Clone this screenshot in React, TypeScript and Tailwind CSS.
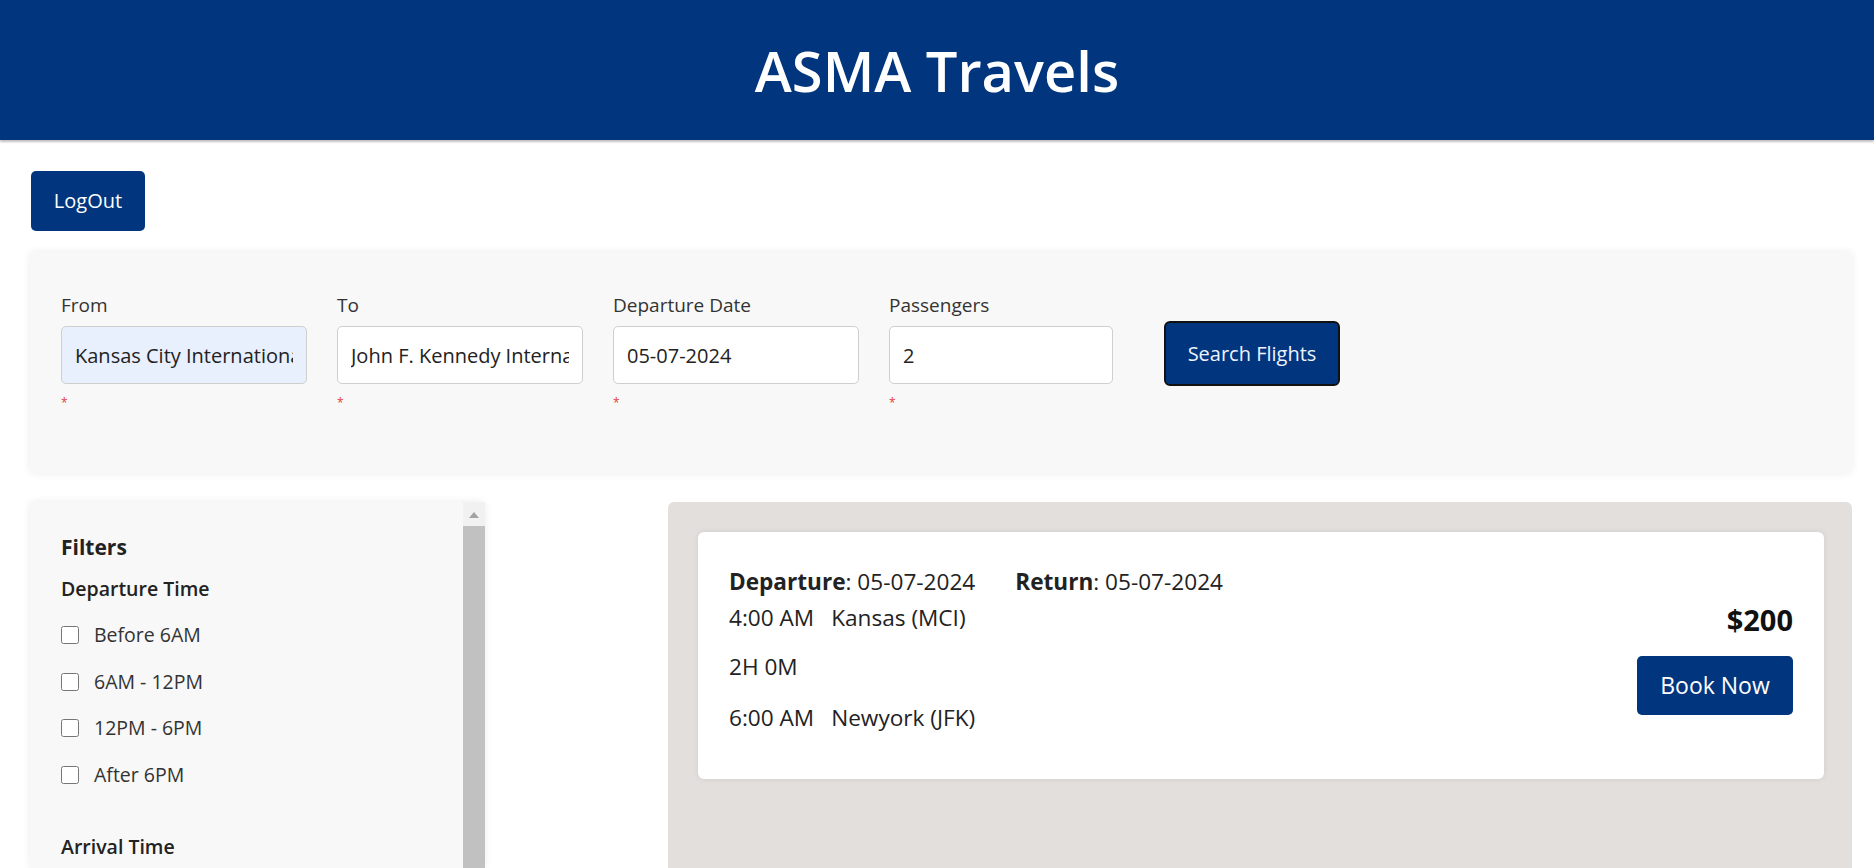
import { useState } from 'react'

const timeSlots = ['Before 6AM', '6AM - 12PM', '12PM - 6PM', 'After 6PM']

const inputClass =
  'h-[58px] rounded-[5px] border border-[#cfcfcf] px-[13px] text-[20px] text-[#222] outline-none'

function Field({
  label,
  value,
  width,
  autofill,
}: {
  label: string
  value: string
  width: string
  autofill?: boolean
}) {
  return (
    <div className={`flex flex-col ${width}`}>
      <span className="text-[19px] leading-[22px] text-[#333]">{label}</span>
      <input
        readOnly
        value={value}
        className={`${inputClass} mt-[10px] w-full ${autofill ? 'bg-[#e8f0fe]' : 'bg-white'}`}
      />
      <span className="mt-[12px] text-[12px] leading-[14px] text-[#e53935]">*</span>
    </div>
  )
}

export default function App() {
  const [checked, setChecked] = useState<string[]>([])

  const toggle = (slot: string) =>
    setChecked((prev) => (prev.includes(slot) ? prev.filter((s) => s !== slot) : [...prev, slot]))

  return (
    <div className="min-h-screen bg-white font-['Open_Sans',sans-serif] text-[#222]">
      <header className="flex h-[140px] items-center justify-center bg-[#01367f] shadow-[0_2px_2px_rgba(0,0,0,0.25)]">
        <h1 className="text-[56px] font-semibold leading-none text-white">ASMA Travels</h1>
      </header>

      <div className="pl-[30px] pr-[22px]">
        <button
          type="button"
          className="ml-[1px] mt-[31px] h-[60px] w-[114px] rounded-[5px] bg-[#01367f] text-[20px] text-white"
        >
          LogOut
        </button>

        <section className="mt-[21px] flex h-[221px] items-start gap-[30px] rounded-[4px] bg-[#f8f8f8] pl-[31px] pt-[42px] shadow-[0_0_8px_rgba(0,0,0,0.08)]">
          <Field label="From" value="Kansas City International Airport" width="w-[246px]" autofill />
          <Field label="To" value="John F. Kennedy International Airport" width="w-[246px]" />
          <Field label="Departure Date" value="05-07-2024" width="w-[246px]" />
          <Field label="Passengers" value="2" width="w-[224px]" />
          <button
            type="button"
            className="ml-[21px] mt-[27px] h-[65px] w-[176px] rounded-[6px] border-2 border-[#111] bg-[#01367f] text-[20px] text-[#eef3ff]"
          >
            Search Flights
          </button>
        </section>

        <div className="mt-[29px] flex items-start gap-[183px]">
          <aside className="flex h-[366px] w-[455px] shrink-0 rounded-t-[4px] bg-[#f8f8f8] shadow-[0_0_8px_rgba(0,0,0,0.08)]">
            <div className="flex-1 pl-[31px] pt-[32px]">
              <h2 className="text-[21px] font-bold leading-[26px] text-[#222]">Filters</h2>
              <h3 className="mt-[17px] text-[19.5px] font-semibold leading-[24px] text-[#222]">
                Departure Time
              </h3>
              <div className="mt-[22px] flex flex-col gap-[22.5px]">
                {timeSlots.map((slot) => (
                  <label
                    key={slot}
                    className="flex h-[24px] items-center gap-[15px] text-[19.5px] text-[#333]"
                  >
                    <input
                      type="checkbox"
                      checked={checked.includes(slot)}
                      onChange={() => toggle(slot)}
                      className="h-[18px] w-[18px] accent-[#01367f]"
                    />
                    {slot}
                  </label>
                ))}
              </div>
              <h3 className="mt-[48px] text-[19.5px] font-semibold leading-[24px] text-[#222]">
                Arrival Time
              </h3>
            </div>
            <div className="flex w-[22px] flex-col items-center bg-[#f1f1f1]">
              <svg width="10" height="6" viewBox="0 0 10 6" className="mt-[10px]">
                <path d="M0 6 L5 0 L10 6 Z" fill="#a3a3a3" />
              </svg>
              <div className="mt-[8px] w-full flex-1 bg-[#c1c1c1]" />
            </div>
          </aside>

          <main className="h-[366px] flex-1 rounded-t-[6px] bg-[#e2dfdd] pl-[30px] pr-[28px] pt-[30px]">
            <div className="flex h-[247px] items-center justify-between rounded-[6px] bg-white pl-[31px] pr-[31px] shadow-[0_0_6px_rgba(0,0,0,0.08)]">
              <div className="flex flex-col self-start pt-[35px] text-[22.6px] leading-[30px] text-[#222]">
                <div className="flex gap-[40px]">
                  <span>
                    <b className="font-bold">Departure</b>: 05-07-2024
                  </span>
                  <span>
                    <b className="font-bold">Return</b>: 05-07-2024
                  </span>
                </div>
                <div className="mt-[6px] flex gap-[17px]">
                  <span>4:00 AM</span>
                  <span>Kansas (MCI)</span>
                </div>
                <div className="mt-[19px]">2H 0M</div>
                <div className="mt-[21px] flex gap-[17px]">
                  <span>6:00 AM</span>
                  <span>Newyork (JFK)</span>
                </div>
              </div>
              <div className="flex flex-col items-end pt-[7px]">
                <span className="text-[29px] font-bold leading-[34px] text-[#111]">$200</span>
                <button
                  type="button"
                  className="mt-[19px] h-[59px] w-[156px] rounded-[5px] bg-[#01367f] text-[23px] text-white"
                >
                  Book Now
                </button>
              </div>
            </div>
          </main>
        </div>
      </div>
    </div>
  )
}
